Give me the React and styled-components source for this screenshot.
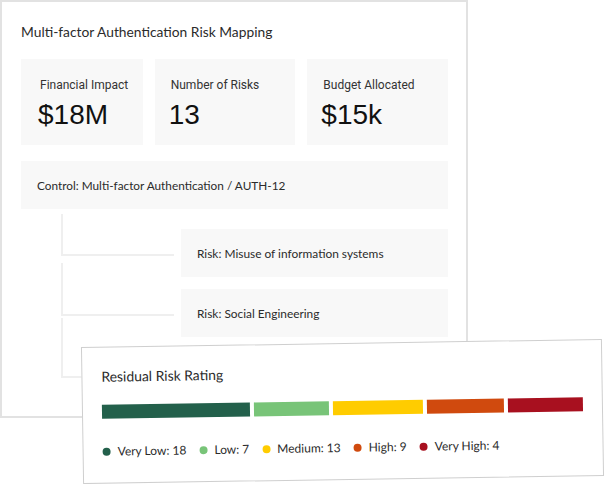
import React from 'react';
import styled, { createGlobalStyle } from 'styled-components';

const GlobalStyle = createGlobalStyle`
    html, body {
        margin: 0;
        padding: 0;
        background: #ffffff;
    }
    body {
        font-family: Lato, "Open Sans", sans-serif;
        color: #2b2b2b;
    }
`;

const stats = [
    { label: 'Financial Impact', value: '$18M', pad: 19 },
    { label: 'Number of Risks', value: '13', pad: 16 },
    { label: 'Budget Allocated', value: '$15k', pad: 16 },
];

// connector: how far it reaches up above the row, and its height down to the row middle
const risks = [
    { text: 'Risk: Misuse of information systems', up: 15, h: 40 },
    { text: 'Risk: Social Engineering', up: 26, h: 51 },
    { text: '', up: 31, h: 58 }, // third row sits under the rating card
];

const ratings = [
    { label: 'Very Low', count: 18, color: '#23604b', width: 148 },
    { label: 'Low', count: 7, color: '#78c478', width: 75 },
    { label: 'Medium', count: 13, color: '#ffcc00', width: 90 },
    { label: 'High', count: 9, color: '#d04a0e', width: 77 },
    { label: 'Very High', count: 4, color: '#a8101f', width: 75 },
];

function App() {
    return (
        <Page>
            <GlobalStyle />
            <MappingCard>
                <Title>Multi-factor Authentication Risk Mapping</Title>
                <StatGrid>
                    {stats.map((s) => (
                        <StatCard key={s.label} $pad={s.pad}>
                            <StatLabel>{s.label}</StatLabel>
                            <StatValue>{s.value}</StatValue>
                        </StatCard>
                    ))}
                </StatGrid>
                <ControlBox>Control: Multi-factor Authentication / AUTH-12</ControlBox>
                <Tree>
                    {risks.map((r, i) => (
                        <TreeRow key={i}>
                            <Connector $up={r.up} $h={r.h} />
                            <RiskBox>{r.text}</RiskBox>
                        </TreeRow>
                    ))}
                </Tree>
            </MappingCard>

            <RatingCard>
                <RatingTitle>Residual Risk Rating</RatingTitle>
                <Bar>
                    {ratings.map((r) => (
                        <Segment key={r.label} $color={r.color} $grow={r.width} />
                    ))}
                </Bar>
                <Legend>
                    {ratings.map((r) => (
                        <LegendItem key={r.label}>
                            <Dot $color={r.color} />
                            {r.label}: {r.count}
                        </LegendItem>
                    ))}
                </Legend>
            </RatingCard>
        </Page>
    );
}

const Page = styled.div`
    position: relative;
    width: 606px;
    height: 484px;
    overflow: hidden;
`;

const MappingCard = styled.div`
    box-sizing: border-box;
    width: 468px;
    height: 418px;
    border: 2px solid #e2e2e2;
    background: #fff;
    padding: 20px 18px 0 19px;
    display: flex;
    flex-direction: column;
`;

const Title = styled.h2`
    margin: 0;
    font-size: 13.8px;
    line-height: 20px;
    font-weight: 400;
    color: #2b2b2b;
`;

const StatGrid = styled.div`
    display: grid;
    grid-template-columns: minmax(0, 122fr) minmax(0, 141fr) minmax(0, 141fr);
    gap: 12px;
    margin-top: 17px;
`;

const StatCard = styled.div`
    background: #f8f8f8;
    height: 86px;
    box-sizing: border-box;
    padding: 18px 0 0 ${(p) => p.$pad}px;
    white-space: nowrap;
    overflow: hidden;
`;

const StatLabel = styled.div`
    font-family: Roboto, "Liberation Sans", sans-serif;
    font-size: 12px;
    line-height: 16px;
    color: #333;
`;

const StatValue = styled.div`
    font-family: "Liberation Sans", Arial, sans-serif;
    font-size: 28px;
    line-height: 32px;
    margin-top: 6px;
    margin-left: -2px;
    color: #111;
`;

const ControlBox = styled.div`
    margin-top: 16px;
    height: 48px;
    background: #f8f8f8;
    display: flex;
    align-items: center;
    padding-left: 16px;
    font-size: 11.8px;
    color: #2b2b2b;
`;

const Tree = styled.div`
    display: flex;
    flex-direction: column;
    gap: 12px;
    margin-top: 20px;
`;

const TreeRow = styled.div`
    display: flex;
    align-items: flex-start;
    padding-left: 40px;
`;

const Connector = styled.div`
    width: 111px;
    height: ${(p) => p.$h}px;
    margin-top: -${(p) => p.$up}px;
    margin-right: 7px;
    border-left: 2px solid #efefef;
    border-bottom: 2px solid #efefef;
    flex: none;
`;

const RiskBox = styled.div`
    flex: 1;
    height: 48px;
    background: #f8f8f8;
    display: flex;
    align-items: center;
    padding-left: 16px;
    font-size: 11.9px;
    color: #2b2b2b;
`;

const RatingCard = styled.div`
    position: absolute;
    left: 82px;
    top: 343px;
    width: 521px;
    height: 137px;
    box-sizing: border-box;
    background: #fff;
    border: 1.5px solid #cfcfcf;
    transform: rotate(-0.9deg);
    padding: 19px 19px 0 19px;
    display: flex;
    flex-direction: column;
`;

const RatingTitle = styled.div`
    font-size: 13.9px;
    line-height: 20px;
    color: #2b2b2b;
`;

const Bar = styled.div`
    display: flex;
    gap: 4px;
    height: 14px;
    margin-top: 18px;
`;

const Segment = styled.div`
    flex: ${(p) => p.$grow} 1 0;
    background: ${(p) => p.$color};
`;

const Legend = styled.div`
    display: flex;
    align-items: center;
    gap: 13px;
    margin-top: 25px;
`;

const LegendItem = styled.div`
    display: flex;
    align-items: center;
    gap: 7px;
    font-size: 12px;
    color: #2b2b2b;
`;

const Dot = styled.span`
    width: 8px;
    height: 8px;
    border-radius: 50%;
    background: ${(p) => p.$color};
`;

export default App;
